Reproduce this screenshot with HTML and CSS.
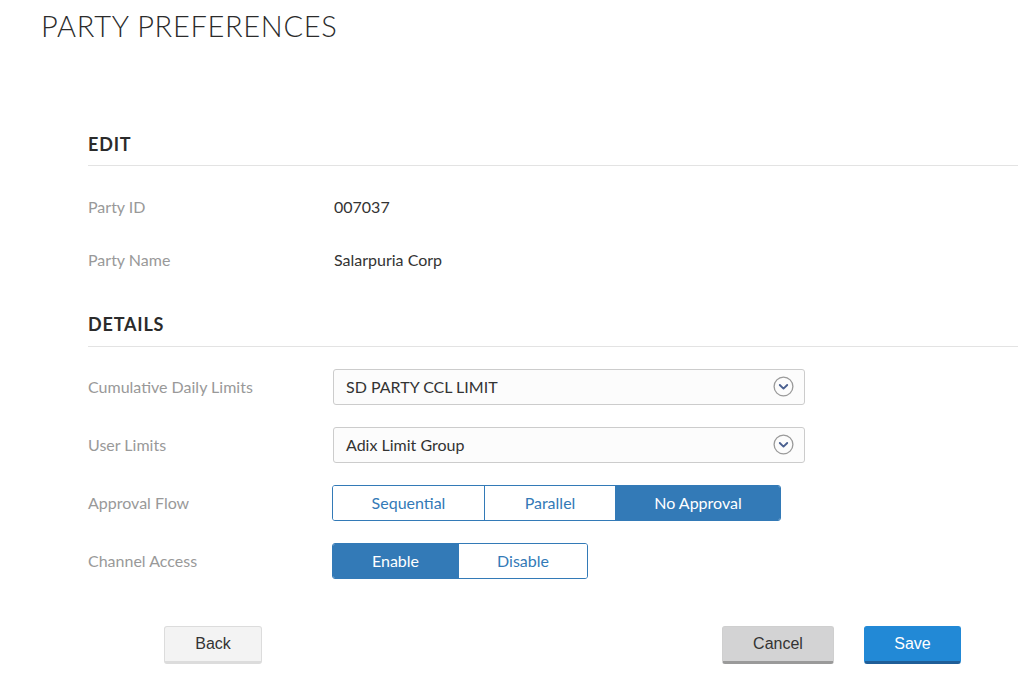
FILE: index.html
```html
<!DOCTYPE html>
<html>
<head>
<meta charset="utf-8">
<link rel="stylesheet" href="styles.css">
</head>
<body>
<h1 class="page-title">PARTY PREFERENCES</h1>
<main class="content">
  <section class="section">
    <h2 class="section-title">EDIT</h2>
    <div class="info-list">
      <div class="info-row"><span class="label">Party ID</span><span class="value">007037</span></div>
      <div class="info-row"><span class="label">Party Name</span><span class="value">Salarpuria Corp</span></div>
    </div>
  </section>
  <section class="section details">
    <h2 class="section-title">DETAILS</h2>
    <div class="form-list">
      <div class="form-row">
        <span class="label">Cumulative Daily Limits</span>
        <div class="select"><span>SD PARTY CCL LIMIT</span>
          <svg class="chev" width="21" height="21" viewBox="0 0 21 21"><circle cx="10.5" cy="10.5" r="9.4" fill="none" stroke="#9a9a9a" stroke-width="1.3"/><path d="M6.8 9 L10.5 12.6 L14.2 9" fill="none" stroke="#4a6090" stroke-width="1.9" stroke-linecap="round" stroke-linejoin="round"/></svg>
        </div>
      </div>
      <div class="form-row">
        <span class="label">User Limits</span>
        <div class="select"><span>Adix Limit Group</span>
          <svg class="chev" width="21" height="21" viewBox="0 0 21 21"><circle cx="10.5" cy="10.5" r="9.4" fill="none" stroke="#9a9a9a" stroke-width="1.3"/><path d="M6.8 9 L10.5 12.6 L14.2 9" fill="none" stroke="#4a6090" stroke-width="1.9" stroke-linecap="round" stroke-linejoin="round"/></svg>
        </div>
      </div>
      <div class="form-row">
        <span class="label">Approval Flow</span>
        <div class="seg">
          <span class="seg-item w-seq">Sequential</span>
          <span class="seg-item w-par">Parallel</span>
          <span class="seg-item w-noa active">No Approval</span>
        </div>
      </div>
      <div class="form-row">
        <span class="label">Channel Access</span>
        <div class="seg">
          <span class="seg-item w-en active">Enable</span>
          <span class="seg-item w-dis">Disable</span>
        </div>
      </div>
    </div>
  </section>
  <div class="actions">
    <button class="btn btn-back">Back</button>
    <div class="actions-right">
      <button class="btn btn-cancel">Cancel</button>
      <button class="btn btn-save">Save</button>
    </div>
  </div>
</main>
</body>
</html>
```
FILE: styles.css
```css
html, body {
  margin: 0;
  padding: 0;
  background: #ffffff;
}
body {
  font-family: Lato, "Open Sans", sans-serif;
  color: #333333;
  width: 1018px;
  height: 696px;
  overflow: hidden;
}
.page-title {
  margin: 0;
  padding: 9px 0 0 41px;
  font-size: 29px;
  font-weight: 300;
  line-height: 1.2;
  color: #2b2b2b;
  letter-spacing: 0.7px;
}
.content {
  margin-left: 88px;
  padding-top: 90px;
}
.section-title {
  margin: 0;
  font-size: 18px;
  font-weight: 700;
  line-height: 1.2;
  letter-spacing: 0.8px;
  color: #2b2b2b;
  padding-bottom: 10px;
  border-bottom: 1px solid #e3e3e3;
}
.info-list {
  margin-top: 14px;
}
.info-row {
  display: grid;
  grid-template-columns: 246px 1fr;
  height: 53px;
  align-items: center;
  font-size: 16px;
}
.label {
  color: #999999;
  font-size: 16px;
}
.value {
  color: #333333;
}
.details {
  margin-top: 28px;
}
.form-list {
  margin-top: 22px;
  display: flex;
  flex-direction: column;
  gap: 22px;
}
.form-row {
  display: grid;
  grid-template-columns: 244px 1fr;
  align-items: center;
  height: 36px;
}
.select {
  display: flex;
  align-items: center;
  justify-content: space-between;
  padding: 0 10px 0 12px;
  box-sizing: border-box;
  width: 472px;
  height: 36px;
  border: 1px solid #cccccc;
  border-radius: 3px;
  background: #fcfcfc;
  font-size: 16px;
  color: #333;
  margin-left: 1px;
}
.chev {
  display: block;
}
.seg {
  display: flex;
  height: 36px;
  border: 1px solid #337ab7;
  border-radius: 3px;
  box-sizing: border-box;
  overflow: hidden;
  width: max-content;
}
.seg-item {
  display: flex;
  align-items: center;
  justify-content: center;
  font-size: 16px;
  color: #337ab7;
  background: #ffffff;
  box-sizing: border-box;
}
.seg-item + .seg-item {
  border-left: 1px solid #337ab7;
}
.seg-item.active {
  background: #337ab7;
  color: #ffffff;
}
.w-seq { width: 151px; }
.w-par { width: 131px; }
.w-noa { width: 165px; }
.w-en { width: 125px; }
.w-dis { width: 129px; }
.actions {
  margin-top: 47px;
  display: flex;
  justify-content: space-between;
  padding-left: 76px;
  width: 873px;
  box-sizing: border-box;
}
.actions-right {
  display: flex;
  gap: 30px;
}
.btn {
  font-family: "Liberation Sans", Arial, sans-serif;
  font-size: 16px;
  height: 38px;
  border-radius: 3px;
  padding: 0;
  cursor: pointer;
  box-sizing: border-box;
}
.btn-back {
  width: 98px;
  background: #f3f3f3;
  color: #333;
  border: 1px solid #dcdcdc;
  border-bottom: 3px solid #dcdcdc;
}
.btn-cancel {
  width: 112px;
  background: #d3d3d4;
  color: #333;
  border: 1px solid #cfcfcf;
  border-bottom: 3px solid #9a9a9a;
}
.btn-save {
  width: 97px;
  background: #2289d6;
  color: #ffffff;
  border: 1px solid #2289d6;
  border-bottom: 3px solid #1f5e98;
}
```
